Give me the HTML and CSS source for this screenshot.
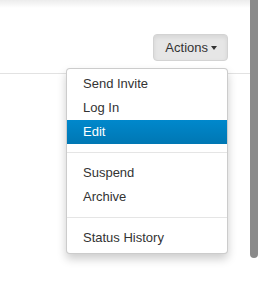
FILE: index.html
```html
<!DOCTYPE html>
<html lang="en">
<head>
  <meta charset="UTF-8">
  <meta name="viewport" content="width=device-width, initial-scale=1.0">
  <title>Actions</title>
  <link rel="stylesheet" href="styles.css">
</head>
<body>
  <div class="frame">
    <div class="page">
      <div class="toolbar">
        <div class="btn-group">
          <button class="btn">Actions <span class="caret"></span></button>
          <ul class="dropdown-menu">
            <li><a href="#">Send Invite</a></li>
            <li><a href="#">Log In</a></li>
            <li class="active"><a href="#">Edit</a></li>
            <li class="divider"></li>
            <li><a href="#">Suspend</a></li>
            <li><a href="#">Archive</a></li>
            <li class="divider"></li>
            <li><a href="#">Status History</a></li>
          </ul>
        </div>
      </div>
      <div class="table-top"></div>
    </div>
    <div class="scrollbar">
      <div class="thumb"></div>
    </div>
  </div>
</body>
</html>
```

FILE: styles.css
```css
* { margin: 0; padding: 0; box-sizing: border-box; }
body { font-family: "Liberation Sans", Arial, Helvetica, sans-serif; font-size: 13px; color: #333; background: #fff; }
.frame { display: flex; height: 292px; }
.page { flex: 1; background: linear-gradient(to bottom, #ececec 0px, #fff 8px); }
.toolbar { padding: 34px 22px 0 0; display: flex; justify-content: flex-end; }
.btn-group { position: relative; }
.btn { display: flex; align-items: center; height: 27px; padding: 0 10px 0 11px; font: inherit; color: #333; background: #e6e6e6; border: 1px solid #d3d3d3; border-radius: 4px; box-shadow: inset 0 2px 4px rgba(0,0,0,.08); }
.caret { display: inline-block; margin-left: 3px; width: 0; height: 0; border-top: 4px solid #333; border-left: 3.5px solid transparent; border-right: 3.5px solid transparent; }
.table-top { margin-top: 12px; border-top: 1px solid #e2e2e2; }
.dropdown-menu { position: absolute; top: 34px; right: 0; z-index: 10; width: 162px; list-style: none; padding: 3px 0; background: #fff; border: 1px solid rgba(0,0,0,.2); border-radius: 4px; box-shadow: 0 5px 10px rgba(0,0,0,.2); }
.dropdown-menu a { display: block; padding: 3px 16px; line-height: 18px; color: #333; text-decoration: none; white-space: nowrap; }
.dropdown-menu .active a { color: #fff; background: linear-gradient(to bottom, #0088cc, #0077b3); }
.dropdown-menu .divider { height: 1px; margin: 8px 0; background: #e5e5e5; }
.scrollbar { width: 8px; }
.scrollbar .thumb { height: 258px; background: #8a8a8a; border-radius: 0 0 4px 4px; }
```
